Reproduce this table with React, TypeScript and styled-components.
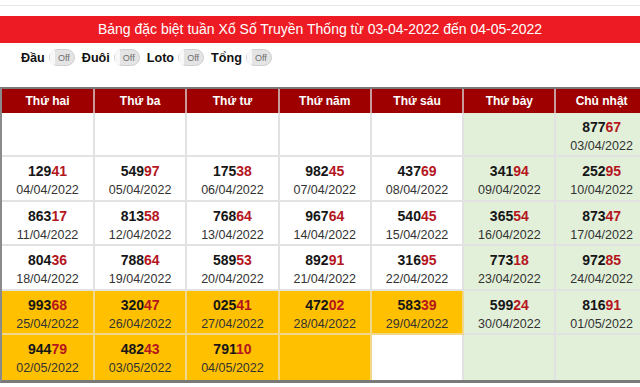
import React from 'react';
import styled, { createGlobalStyle } from 'styled-components';

type Tone = 'white' | 'green' | 'orange';

interface Draw {
  number: string;
  date: string;
}

const GlobalStyle = createGlobalStyle`
  html, body {
    margin: 0;
    padding: 0;
    background: #ffffff;
    overflow: hidden;
  }
  body {
    font-family: "Liberation Sans", Arial, Helvetica, sans-serif;
  }
`;

const Page = styled.div`
  width: 640px;
`;

const TopRule = styled.div`
  height: 5px;
  border-bottom: 1px solid #e6e6e6;
`;

const Banner = styled.div`
  margin-top: 10px;
  height: 27px;
  line-height: 27px;
  background: #ed1c24;
  color: #ffffff;
  font-size: 14px;
  text-align: center;
  white-space: nowrap;
`;

const ToggleBar = styled.div`
  display: flex;
  align-items: center;
  height: 17px;
  margin-top: 6px;
  padding-left: 21px;
`;

const ToggleLabel = styled.span`
  font-size: 12.6px;
  font-weight: 700;
  color: #111111;
  margin-right: 4px;
`;

const Switch = styled.span`
  position: relative;
  display: inline-flex;
  align-items: center;
  justify-content: center;
  box-sizing: border-box;
  width: 26px;
  height: 17px;
  margin-right: 7px;
  padding-left: 4px;
  border: 1px solid #cfcfcf;
  border-radius: 9px;
  background: #e4e4e4;
  color: #6e6e6e;
  font-size: 9px;

  &::before {
    content: '';
    position: absolute;
    left: 0;
    top: 0;
    width: 5px;
    height: 15px;
    border-radius: 8px 0 0 8px;
    background: #f8f8f8;
  }
`;

const Board = styled.div`
  margin-top: 21px;
  width: 650px;
  box-sizing: border-box;
  border-top: 2px solid #7a7a7a;
  border-left: 2px solid #8a8a8a;
  border-bottom: 3px solid #7a7a7a;
  display: grid;
  grid-template-columns: 93px repeat(6, 92.3px);
  grid-template-rows: 23.5px repeat(6, 44.5px);
`;

const HeadCell = styled.div`
  display: flex;
  align-items: center;
  justify-content: center;
  background: #9e0000;
  border-right: 2px solid #c99a9a;
  color: #ffffff;
  font-size: 12px;
  font-weight: 700;
`;

const toneColor: Record<Tone, string> = {
  white: '#ffffff',
  green: '#e2f0da',
  orange: '#ffc000',
};

const lineColor = (tone: Tone) => (tone === 'orange' ? '#f0d78a' : '#e2e2e2');

const Cell = styled.div<{ $tone: Tone; $last: boolean }>`
  display: flex;
  flex-direction: column;
  align-items: center;
  box-sizing: border-box;
  padding-top: 5px;
  background: ${(p) => toneColor[p.$tone]};
  border-right: 2px solid ${(p) => lineColor(p.$tone)};
  border-bottom: ${(p) => (p.$last ? 'none' : `2px solid ${lineColor(p.$tone)}`)};
`;

const Number = styled.div`
  font-size: 14px;
  font-weight: 700;
  line-height: 18px;
  color: #161616;
`;

const Tail = styled.span`
  color: #b5161e;
`;

const DateText = styled.div`
  font-size: 12.5px;
  line-height: 20px;
  color: #333333;
`;

const days = ['Thứ hai', 'Thứ ba', 'Thứ tư', 'Thứ năm', 'Thứ sáu', 'Thứ bảy', 'Chủ nhật'];

const d = (number: string, date: string): Draw => ({ number, date });

const weeks: (Draw | null)[][] = [
  [null, null, null, null, null, null, d('87767', '03/04/2022')],
  [
    d('12941', '04/04/2022'),
    d('54997', '05/04/2022'),
    d('17538', '06/04/2022'),
    d('98245', '07/04/2022'),
    d('43769', '08/04/2022'),
    d('34194', '09/04/2022'),
    d('25295', '10/04/2022'),
  ],
  [
    d('86317', '11/04/2022'),
    d('81358', '12/04/2022'),
    d('76864', '13/04/2022'),
    d('96764', '14/04/2022'),
    d('54045', '15/04/2022'),
    d('36554', '16/04/2022'),
    d('87347', '17/04/2022'),
  ],
  [
    d('80436', '18/04/2022'),
    d('78864', '19/04/2022'),
    d('58953', '20/04/2022'),
    d('89291', '21/04/2022'),
    d('31695', '22/04/2022'),
    d('77318', '23/04/2022'),
    d('97285', '24/04/2022'),
  ],
  [
    d('99368', '25/04/2022'),
    d('32047', '26/04/2022'),
    d('02541', '27/04/2022'),
    d('47202', '28/04/2022'),
    d('58339', '29/04/2022'),
    d('59924', '30/04/2022'),
    d('81691', '01/05/2022'),
  ],
  [
    d('94479', '02/05/2022'),
    d('48243', '03/05/2022'),
    d('79110', '04/05/2022'),
    null,
    null,
    null,
    null,
  ],
];

const toneFor = (row: number, col: number): Tone => {
  if (col >= 5) return 'green';
  if (row === 4) return 'orange';
  if (row === 5 && col <= 3) return 'orange';
  return 'white';
};

const toggles = ['Đầu', 'Đuôi', 'Loto', 'Tổng'];

export default function App() {
  return (
    <Page>
      <GlobalStyle />
      <TopRule />
      <Banner>Bảng đặc biệt tuần Xổ Số Truyền Thống từ 03-04-2022 đến 04-05-2022</Banner>
      <ToggleBar>
        {toggles.map((t) => (
          <React.Fragment key={t}>
            <ToggleLabel>{t}</ToggleLabel>
            <Switch>Off</Switch>
          </React.Fragment>
        ))}
      </ToggleBar>
      <Board>
        {days.map((day) => (
          <HeadCell key={day}>{day}</HeadCell>
        ))}
        {weeks.map((week, r) =>
          week.map((draw, c) => (
            <Cell key={`${r}-${c}`} $tone={toneFor(r, c)} $last={r === weeks.length - 1}>
              {draw && (
                <>
                  <Number>
                    {draw.number.slice(0, 3)}
                    <Tail>{draw.number.slice(3)}</Tail>
                  </Number>
                  <DateText>{draw.date}</DateText>
                </>
              )}
            </Cell>
          ))
        )}
      </Board>
    </Page>
  );
}
